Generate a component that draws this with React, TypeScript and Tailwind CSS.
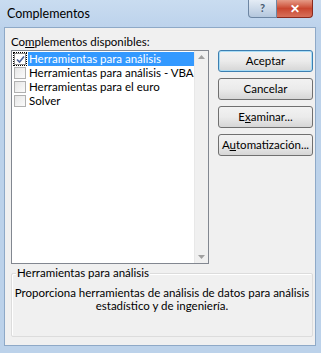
import React from "react";

const items = [
  { label: "Herramientas para análisis", checked: true },
  { label: "Herramientas para análisis - VBA", checked: false },
  { label: "Herramientas para el euro", checked: false },
  { label: "Solver", checked: false },
];

function Btn({ children, def }: { children: React.ReactNode; def?: boolean }) {
  return (
    <button
      className={`h-[22px] w-[95px] rounded-[3px] border text-[11.5px] text-black whitespace-nowrap bg-gradient-to-b from-[#f2f2f2] via-[#ebebeb] to-[#d6d6d6] ${
        def ? "border-[#3c7fb1] shadow-[inset_0_0_0_1px_#a9dcf5]" : "border-[#707070]"
      }`}
    >
      {children}
    </button>
  );
}

export default function App() {
  return (
    <div
      className="w-[321px] h-[353px] bg-[#bcd2ea] flex flex-col overflow-hidden"
      style={{ fontFamily: 'Lato, "Noto Sans", sans-serif' }}
    >
      {/* title bar */}
      <div className="h-[27px] flex items-start bg-gradient-to-b from-[#c9dcf0] to-[#bdd3ec]">
        <div className="pl-[7px] pt-[5px] text-[12.5px] text-black">Complementos</div>
        <div className="ml-auto mr-[8px] flex">
          <div className="w-[29px] h-[18px] rounded-bl-[4px] border border-[#6d86a3] border-t-0 bg-gradient-to-b from-[#e4ecf5] to-[#b4c7dd] flex items-center justify-center text-[11px] text-[#475a70] font-bold">
            ?
          </div>
          <div className="w-[36px] h-[18px] rounded-br-[4px] border border-[#8a2a1e] border-t-0 border-l-0 bg-gradient-to-b from-[#e59a86] via-[#c9462f] to-[#d7705a] flex items-center justify-center text-[12px] text-white font-bold">
            ✕
          </div>
        </div>
      </div>

      {/* client */}
      <div className="ml-[4px] mr-[5px] mb-[7px] flex-1 bg-[#f0f0f0] border border-[#8ea9c7] px-[6px] pt-[7px] text-[11.5px] text-black">
        <div className="leading-[14px] mb-[1px]">
          Co<span className="underline">m</span>plementos disponibles:
        </div>
        <div className="flex gap-[9px]">
          <div className="w-[198px] h-[214px] bg-white border border-[#828790] flex">
            <div className="flex-1 pt-[1px]">
              {items.map((it, i) => (
                <div key={i} className="flex items-center h-[14px] pl-[2px]">
                  <div
                    className={`w-[12px] h-[12px] shrink-0 border flex items-center justify-center ${
                      it.checked
                        ? "border-[#8f8f8f] bg-white outline outline-1 outline-dotted outline-black"
                        : "border-[#b0b0b0] bg-gradient-to-br from-[#e6e6e6] to-[#fbfbfb]"
                    }`}
                  >
                    {it.checked && (
                      <svg width="9" height="9" viewBox="0 0 9 9">
                        <path d="M1 4.5 L3.5 7 L8 1.5" stroke="#4a5f97" strokeWidth="1.6" fill="none" />
                      </svg>
                    )}
                  </div>
                  <div
                    className={`ml-[2px] h-[14px] leading-[14px] pl-[1px] flex-1 whitespace-nowrap ${
                      it.checked ? "bg-[#3399ff] text-white" : ""
                    }`}
                  >
                    {it.label}
                  </div>
                </div>
              ))}
            </div>
            <div className="w-[17px] bg-[#f0f0f0] border-l border-[#e8e8e8] flex flex-col justify-between items-center py-[4px]">
              <svg width="7" height="4" viewBox="0 0 7 4">
                <path d="M0 4 L3.5 0 L7 4 Z" fill="#a0a0a0" />
              </svg>
              <svg width="7" height="4" viewBox="0 0 7 4">
                <path d="M0 0 L3.5 4 L7 0 Z" fill="#a0a0a0" />
              </svg>
            </div>
          </div>
          <div className="flex flex-col gap-[6px]">
            <Btn def>Aceptar</Btn>
            <Btn>Cancelar</Btn>
            <Btn>
              E<span className="underline">x</span>aminar...
            </Btn>
            <Btn>
              A<span className="underline">u</span>tomatización...
            </Btn>
          </div>
        </div>

        {/* group */}
        <div className="relative mt-[9px] w-[302px] h-[64px] border border-[#dcdcdc] rounded-[2px] shadow-[inset_1px_1px_0_#fff]">
          <div className="absolute -top-[8px] left-[4px] bg-[#f0f0f0] px-[1px] leading-[14px] whitespace-nowrap">
            Herramientas para análisis
          </div>
          <div className="pt-[12px] text-center leading-[13px] whitespace-nowrap">
            Proporciona herramientas de análisis de datos para análisis
            <br />
            estadístico y de ingeniería.
          </div>
        </div>
      </div>
    </div>
  );
}
